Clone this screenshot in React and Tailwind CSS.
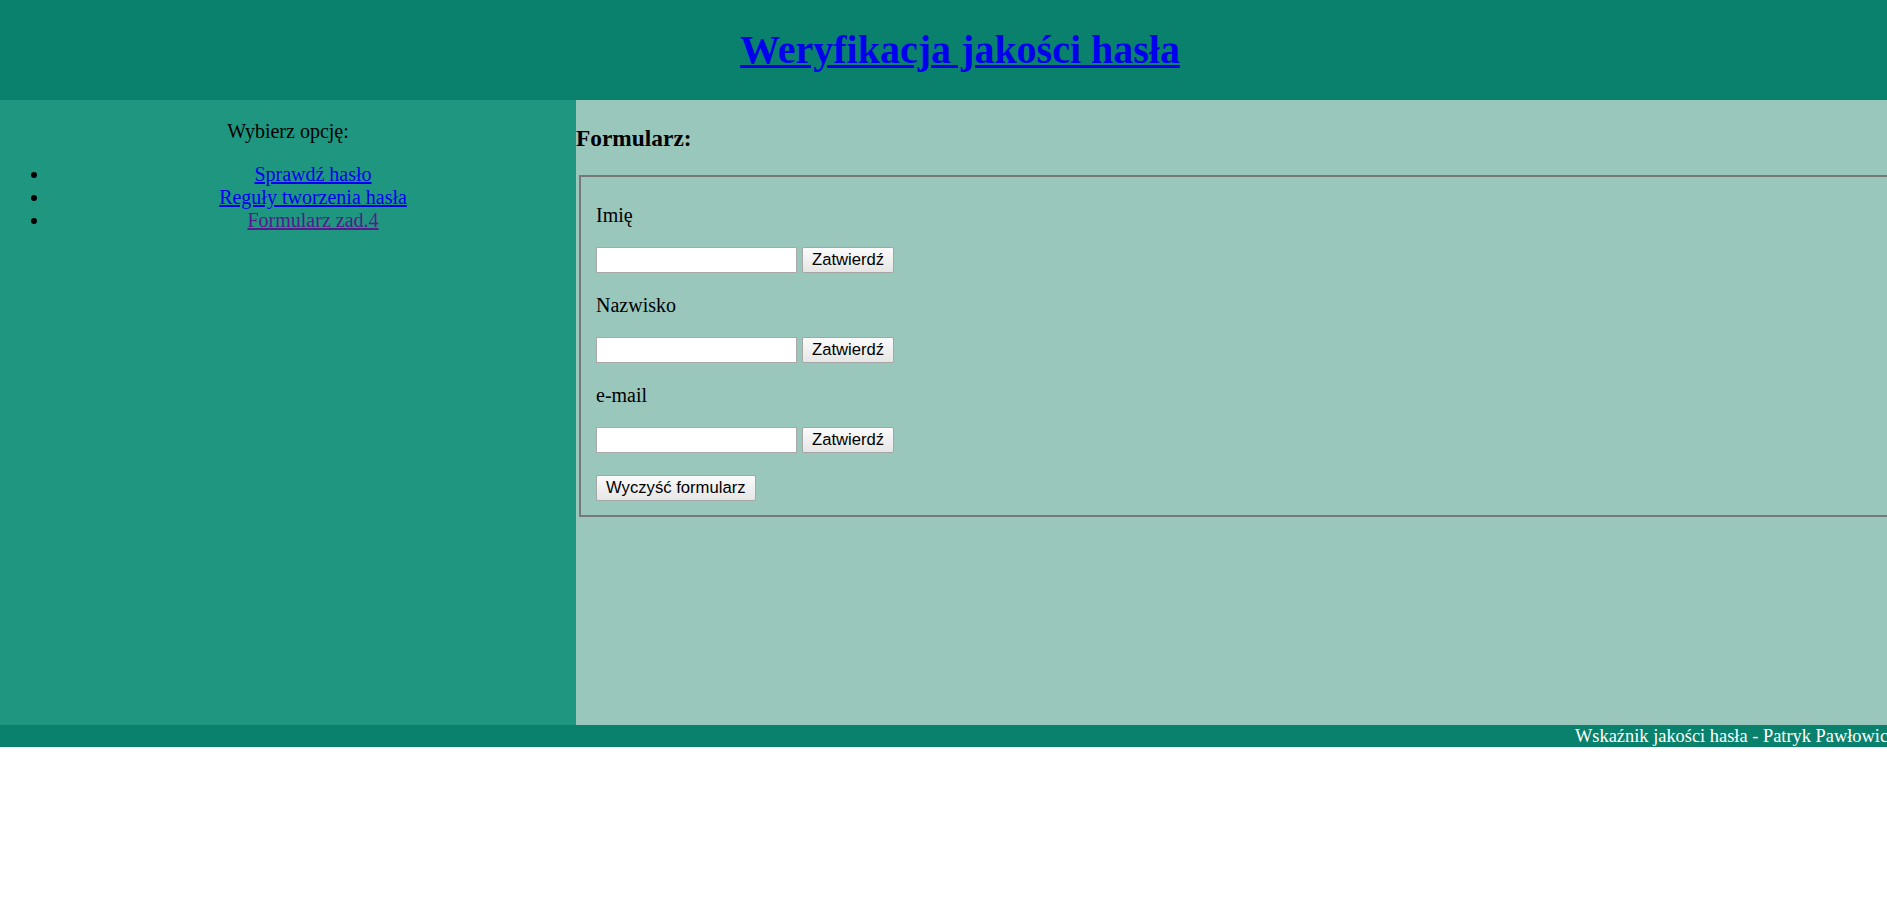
import { useState } from 'react'

const pola = [
  { id: 'imie', etykieta: 'Imię' },
  { id: 'nazwisko', etykieta: 'Nazwisko' },
  { id: 'email', etykieta: 'e-mail' },
]

function Przycisk({ children, onClick }) {
  return (
    <button
      type="button"
      onClick={onClick}
      className="h-[26px] rounded-[2px] border border-[#a6a6a6] bg-gradient-to-b from-[#fbfbfb] to-[#e6e6e6] px-[9px] font-['Liberation_Sans',Arial,sans-serif] text-[16.67px] leading-none text-black"
    >
      {children}
    </button>
  )
}

function App() {
  const [wartosci, setWartosci] = useState({ imie: '', nazwisko: '', email: '' })

  const wyczysc = () => setWartosci({ imie: '', nazwisko: '', email: '' })

  return (
    <div className="min-h-screen w-full overflow-hidden bg-white font-['Liberation_Serif','Times_New_Roman',serif] text-[20px] leading-[23px] text-black">
      <div className="w-[1920px]">
        <header className="flex h-[100px] items-center justify-center bg-[#09816c]">
          <h1 className="text-[40px] font-bold leading-[46px]">
            <a href="#" className="text-[#0000ee] underline decoration-[3px]">
              Weryfikacja jakości hasła
            </a>
          </h1>
        </header>

        <div className="flex h-[625px]">
          {/* menu boczne */}
          <aside className="w-[576px] shrink-0 bg-[#1f9680]">
            <p className="mt-[20px] text-center">Wybierz opcję:</p>
            <ul className="mt-[20px] list-disc pl-[50px]">
              <li className="text-center">
                <a href="#" className="text-[#0000ee] underline">Sprawdź hasło</a>
              </li>
              <li className="text-center">
                <a href="#" className="text-[#0000ee] underline">Reguły tworzenia hasła</a>
              </li>
              <li className="text-center">
                <a href="#" className="text-[#551a8b] underline">Formularz zad.4</a>
              </li>
            </ul>
          </aside>

          <main className="flex-1 bg-[#9ac7bc]">
            <h3 className="mt-[25px] text-[23.4px] font-bold leading-[27px]">Formularz:</h3>

            <form
              onSubmit={(e) => e.preventDefault()}
              className="ml-[3px] mt-[23px] w-[1340px] border-2 border-[#777777] pb-[14px] pl-[15px] pt-[27px]"
            >
              <div className="flex flex-col gap-[20px]">
                {pola.map((pole) => (
                  <div key={pole.id} className="flex flex-col gap-[20px]">
                    <label htmlFor={pole.id} className="h-[23px]">
                      {pole.etykieta}
                    </label>
                    <div className="flex h-[27px] items-start gap-[5px]">
                      <input
                        id={pole.id}
                        type="text"
                        value={wartosci[pole.id]}
                        onChange={(e) =>
                          setWartosci({ ...wartosci, [pole.id]: e.target.value })
                        }
                        className="h-[26px] w-[201px] border border-[#a9a9a9] bg-white px-[3px] font-['Liberation_Sans',Arial,sans-serif] text-[16.67px] outline-none"
                      />
                      <Przycisk>Zatwierdź</Przycisk>
                    </div>
                  </div>
                ))}
                <div className="mt-[1px] flex">
                  <Przycisk onClick={wyczysc}>Wyczyść formularz</Przycisk>
                </div>
              </div>
            </form>
          </main>
        </div>

        <footer className="h-[22px] overflow-hidden whitespace-nowrap bg-[#09816c] pl-[1575px] text-[18.4px] leading-[22px] text-white">
          Wskaźnik jakości hasła - Patryk Pawłowicz
        </footer>
      </div>
    </div>
  )
}

export default App
